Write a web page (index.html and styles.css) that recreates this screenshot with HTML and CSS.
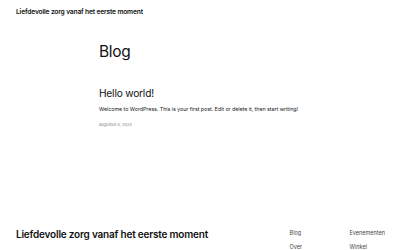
FILE: index.html
```html
<!DOCTYPE html>
<html lang="nl">
<head>
<meta charset="utf-8">
<title>Blog</title>
<link rel="stylesheet" href="styles.css">
</head>
<body>
<header class="site-header">
  <a class="site-title" href="#">Liefdevolle zorg vanaf het eerste moment</a>
</header>
<main class="content">
  <h1 class="page-title">Blog</h1>
  <article class="post">
    <h2 class="post-title">Hello world!</h2>
    <p class="post-excerpt">Welcome to WordPress. This is your first post. Edit or delete it, then start writing!</p>
    <p class="post-date">augustus 6, 2025</p>
  </article>
</main>
<footer class="site-footer">
  <div class="footer-title">Liefdevolle zorg vanaf het eerste moment</div>
  <nav class="footer-nav">
    <a href="#">Blog</a>
    <a href="#">Evenementen</a>
    <a href="#">Over</a>
    <a href="#">Winkel</a>
  </nav>
</footer>
</body>
</html>
```
FILE: styles.css
```css
html, body {
  margin: 0;
  padding: 0;
}
body {
  width: 400px;
  height: 250px;
  overflow: hidden;
  background: #fff;
  color: #111;
  font-family: Inter, "Liberation Sans", sans-serif;
  font-size: 6px;
}
a {
  color: inherit;
  text-decoration: none;
}
.site-header {
  padding: 7px 16px 0;
  height: 12px;
  font-size: 6.65px;
  line-height: 10px;
}
.site-title {
  display: block;
  font-weight: 600;
  letter-spacing: -0.15px;
}
.content {
  padding: 0 0 0 99px;
  height: 181px;
  white-space: nowrap;
}
.page-title {
  margin: 0;
  padding-top: 23px;
  font-size: 15.5px;
  font-weight: 400;
  line-height: 20px;
  letter-spacing: -0.3px;
}
.post {
  margin-top: 24px;
}
.post-title {
  margin: 0;
  font-size: 10.2px;
  font-weight: 400;
  line-height: 14px;
  letter-spacing: -0.2px;
}
.post-excerpt {
  margin: 5px 0 0;
  font-size: 5.35px;
  line-height: 8px;
  letter-spacing: -0.05px;
  color: #222;
}
.post-date {
  margin: 9px 0 0;
  font-size: 4px;
  line-height: 6px;
  color: #888;
}
.site-footer {
  display: flex;
  align-items: flex-start;
  padding: 0 15px 0 16px;
}
.footer-title {
  flex: 1;
  padding-top: 27px;
  font-size: 10px;
  font-weight: 600;
  line-height: 14px;
  letter-spacing: -0.2px;
}
.footer-nav {
  display: grid;
  grid-template-columns: 60px auto;
  row-gap: 6.5px;
  padding-top: 30px;
  font-size: 5.5px;
  line-height: 7px;
  color: #444;
}
```
